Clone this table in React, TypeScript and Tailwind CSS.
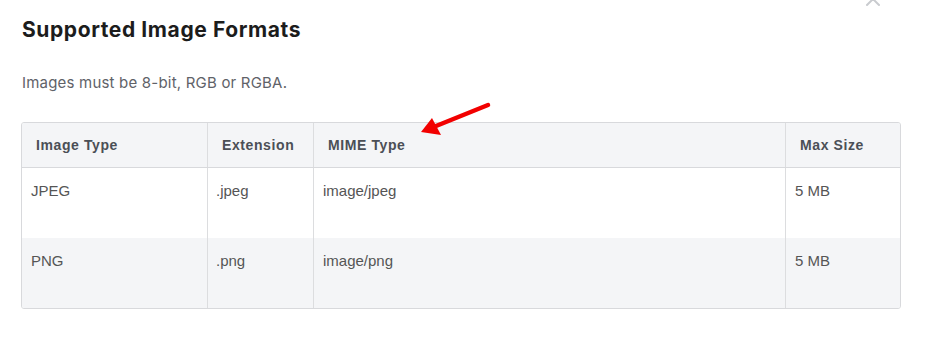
const rows = [
	{ type: 'JPEG', ext: '.jpeg', mime: 'image/jpeg', size: '5 MB' },
	{ type: 'PNG', ext: '.png', mime: 'image/png', size: '5 MB' },
];

const headers = ['Image Type', 'Extension', 'MIME Type', 'Max Size'];

const App = () => {
	return (
		<div className="relative w-[926px] h-[344px] bg-white overflow-hidden">
			{/* close button, cut off at the top */}
			<svg
				className="absolute left-[864px] top-[-10px]"
				width="18"
				height="18"
				viewBox="0 0 18 18">
				<path
					d="M3 3L15 15M15 3L3 15"
					stroke="#c9cbcf"
					strokeWidth="2"
					strokeLinecap="round"
				/>
			</svg>

			<div className="px-[21px] pt-[16px]">
				<h1 className="font-['Inter',sans-serif] text-[21px] leading-[28px] font-bold tracking-[0.6px] text-[#1c1c1c] pl-px">
					Supported Image Formats
				</h1>
				<p className="mt-[27px] font-['Inter',sans-serif] text-[15px] leading-[24px] tracking-[0.2px] text-[#606268] pl-px">
					Images must be 8-bit, RGB or RGBA.
				</p>

				<div className="mt-[27px] w-[880px] border border-[#d8d9dc] rounded-[3px] overflow-hidden font-['Liberation_Sans',Arial,sans-serif]">
					<div className="grid grid-cols-[185px_106px_472px_1fr] bg-[#f4f5f7] border-b border-[#d8d9dc] h-[45px]">
						{headers.map((h, i) => (
							<div
								key={h}
								className={`flex items-center pl-[14px] text-[14px] font-bold tracking-[0.6px] text-[#4b4f56] ${
									i > 0 ? 'border-l border-[#dcdddf]' : ''
								}`}>
								{h}
							</div>
						))}
					</div>
					{rows.map((r, idx) => (
						<div
							key={r.type}
							className={`grid grid-cols-[185px_106px_472px_1fr] h-[70px] text-[15px] leading-[20px] text-[#555] ${
								idx % 2 === 1 ? 'bg-[#f4f5f7]' : 'bg-white'
							}`}>
							<div className="pl-[9px] pt-[13px]">{r.type}</div>
							<div className="pl-[8px] pt-[13px] border-l border-[#dcdddf]">
								{r.ext}
							</div>
							<div className="pl-[9px] pt-[13px] border-l border-[#dcdddf]">
								{r.mime}
							</div>
							<div className="pl-[9px] pt-[13px] border-l border-[#dcdddf]">
								{r.size}
							</div>
						</div>
					))}
				</div>
			</div>

			{/* red annotation arrow */}
			<svg
				className="absolute left-0 top-0 pointer-events-none"
				width="926"
				height="344">
				<line
					x1="488"
					y1="105"
					x2="436"
					y2="126"
					stroke="#f20000"
					strokeWidth="4.5"
					strokeLinecap="round"
				/>
				<polygon points="421,132 432,118 441,135" fill="#f20000" />
			</svg>
		</div>
	);
};

export default App;
